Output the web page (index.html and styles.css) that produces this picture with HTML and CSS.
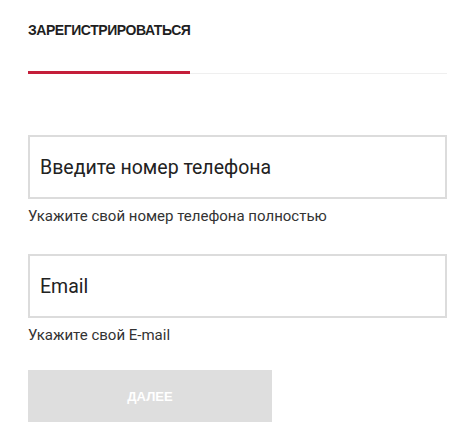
FILE: index.html
```html
<!DOCTYPE html>
<html lang="ru">
<head>
<meta charset="utf-8">
<link rel="stylesheet" href="styles.css">
</head>
<body>
<div class="page">
  <div class="tabs">
    <div class="tab active">ЗАРЕГИСТРИРОВАТЬСЯ</div>
    <div class="tab-rest"></div>
  </div>
  <form class="form">
    <div class="field">
      <div class="input">Введите номер телефона</div>
      <div class="hint">Укажите свой номер телефона полностью</div>
    </div>
    <div class="field">
      <div class="input">Email</div>
      <div class="hint">Укажите свой E-mail</div>
    </div>
    <div class="button">ДАЛЕЕ</div>
  </form>
</div>
</body>
</html>
```
FILE: styles.css
```css
html, body {
  margin: 0;
  padding: 0;
  background: #ffffff;
}
.page {
  padding: 22px 27px 0 28px;
  font-family: Roboto, "Noto Sans", sans-serif;
}
.tabs {
  display: flex;
  align-items: flex-end;
}
.tab {
  font-family: "Liberation Sans", Arial, sans-serif;
  font-weight: bold;
  font-size: 14px;
  line-height: 17px;
  color: #1f1f1f;
  padding-bottom: 32px;
  border-bottom: 3px solid #c41e3a;
  letter-spacing: -0.45px;
}
.tab-rest {
  flex: 1;
  height: 0;
  border-bottom: 1px solid #efefef;
}
.form {
  margin-top: 61px;
  display: flex;
  flex-direction: column;
}
.field {
  display: flex;
  flex-direction: column;
}
.field + .field {
  margin-top: 29px;
}
.input {
  box-sizing: border-box;
  height: 64px;
  border: 2px solid #dcdcdc;
  padding: 0 10px;
  display: flex;
  align-items: center;
  font-size: 19.5px;
  color: #222;
}
.hint {
  margin-top: 8px;
  font-size: 15px;
  line-height: 18px;
  color: #333;
}
.button {
  margin-top: 26px;
  width: 244px;
  height: 52px;
  background: #dedede;
  color: #fff;
  font-family: "Liberation Sans", Arial, sans-serif;
  font-weight: bold;
  font-size: 13px;
  display: flex;
  align-items: center;
  justify-content: center;
}
```
